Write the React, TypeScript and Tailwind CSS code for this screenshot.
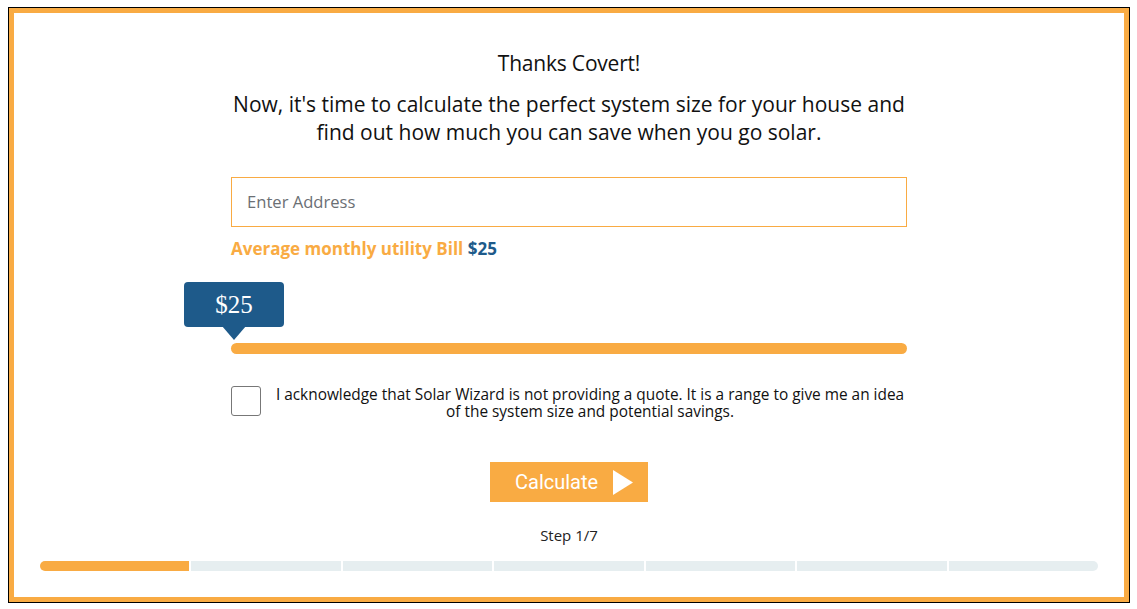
import React from "react";

export default function App() {
  const segs = [0, 1, 2, 3, 4, 5, 6];
  return (
    <div className="w-[1137px] h-[609px] bg-white pt-[7px] pl-[8px]">
      <div className="w-[1122px] h-[596px] border border-black">
        <div
          className="w-full h-full border-[5px] border-[#f9ab43] flex flex-col items-center text-[#111]"
          style={{ fontFamily: "'Open Sans', 'Noto Sans', sans-serif" }}
        >
          <h1 className="mt-[36px] text-[21px] leading-[28px] tracking-[-0.2px]">Thanks Covert!</h1>
          <p className="mt-[13px] text-[21px] leading-[28px] text-center w-[760px]">
            Now, it's time to calculate the perfect system size for your house and
            <br />
            find out how much you can save when you go solar.
          </p>
          <div className="w-[676px] mt-[31px] flex flex-col">
            <div className="h-[50px] border border-[#f9ab43] flex items-center pl-[15px] text-[16.6px] text-[#6b6f74]">
              Enter Address
            </div>
            <div className="mt-[11px] text-[17px] font-bold leading-[22px]">
              <span className="text-[#f9ab43]">Average monthly utility Bill</span>{" "}
              <span className="text-[#1e5a8a]">$25</span>
            </div>
            <div className="relative h-[61px] mt-[22px]">
              <div className="absolute left-[-47px] top-0 w-[100px] h-[45px] bg-[#1e5a8a] rounded-[4px] flex items-center justify-center text-white text-[25px]"
                style={{ fontFamily: "'Liberation Serif', serif" }}>
                $25
              </div>
              <div className="absolute left-[-9px] top-[44px] w-0 h-0 border-l-[12px] border-r-[12px] border-t-[14px] border-l-transparent border-r-transparent border-t-[#1e5a8a]" />
              <div className="absolute left-0 right-0 top-[61px] h-[11px] rounded-full bg-[#f9ab43]" />
            </div>
            <div className="mt-[43px] flex items-start">
              <div className="w-[30px] h-[30px] border border-[#777] rounded-[3px] shrink-0" />
              <p className="flex-1 text-center text-[15.4px] leading-[17px] pl-[12px] whitespace-nowrap">
                I acknowledge that Solar Wizard is not providing a quote. It is a range to give me an idea
                <br />
                of the system size and potential savings.
              </p>
            </div>
          </div>
          <button
            className="mt-[42px] w-[158px] h-[40px] bg-[#f9ab43] text-white flex items-center justify-start pl-[25px] gap-[15px] text-[20px]"
            style={{ fontFamily: "Roboto, sans-serif" }}
          >
            <span>Calculate</span>
            <svg width="20" height="25" viewBox="0 0 20 25">
              <polygon points="0,0 20,12.5 0,25" fill="white" />
            </svg>
          </button>
          <div className="mt-[23px] text-[15px] leading-[20px] text-[#222]">Step 1/7</div>
          <div className="mt-[16px] w-[1058px] flex gap-[2px] h-[10px]">
            {segs.map((i) => (
              <div
                key={i}
                className={
                  "flex-1 h-full " +
                  (i === 0 ? "bg-[#f9ab43] rounded-l-full" : "bg-[#e6eef0]") +
                  (i === 6 ? " rounded-r-full" : "")
                }
              />
            ))}
          </div>
        </div>
      </div>
    </div>
  );
}
